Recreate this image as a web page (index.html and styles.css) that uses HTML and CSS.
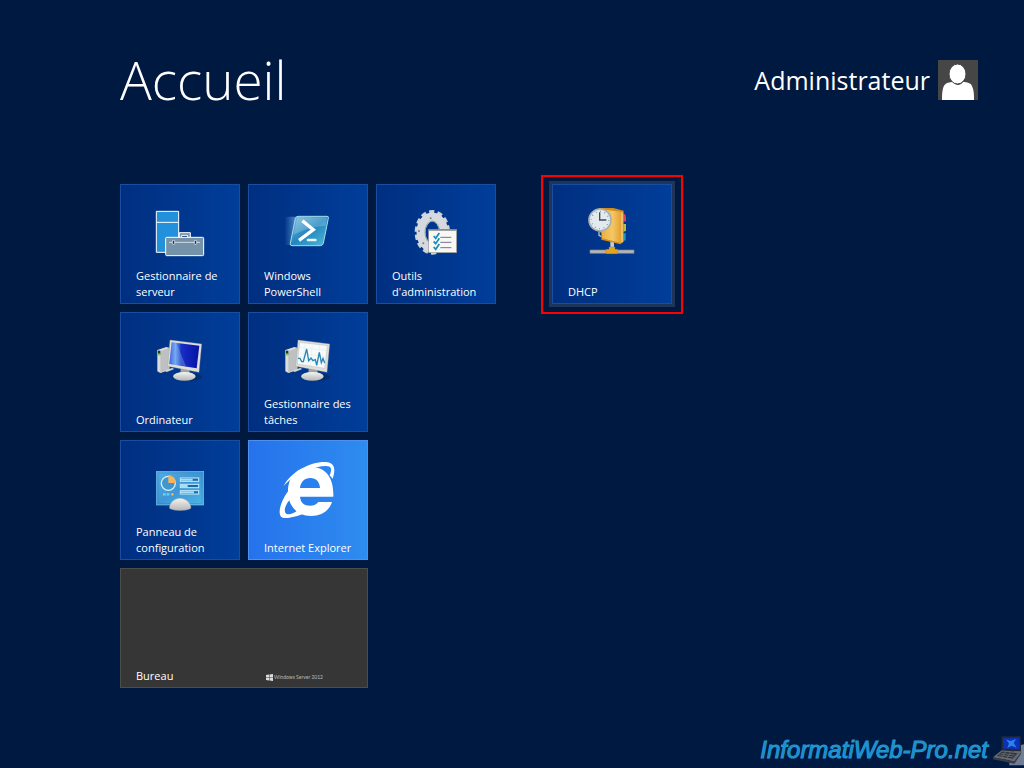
FILE: index.html
```html
<!DOCTYPE html>
<html lang="fr">
<head>
<meta charset="UTF-8">
<meta name="viewport" content="width=device-width, initial-scale=1.0">
<title>Accueil</title>
<link rel="stylesheet" href="styles.css">
</head>
<body>

<header class="header">
    <h1>Accueil</h1>
    <button type="button" class="user">
        <span>Administrateur</span>
        <svg class="avatar" viewBox="0 0 40 40" aria-hidden="true">
            <rect width="40" height="40" fill="#464646"/>
            <path d="M4 40C4 30 5 25 9 23C12 22 14 22 15 22C18 26 22 26 25 22C29 22 33 23 34 26C36 30 36 35 36 40Z" fill="#fff"/>
            <ellipse cx="19.500" cy="14" rx="8.500" ry="10" fill="#fff" stroke="#464646" stroke-width="1"/>
        </svg>
    </button>
</header>

<main class="start">
    <section class="group">
        <div class="tiles">
            <a href="#" class="tile">
                <svg class="icon" viewBox="120 87 144 144" aria-hidden="true">
                    <g stroke="#fff" stroke-width="3">
                        <path d="M121 94H188V217H121ZM121 127H188" fill="#2390dc"/>
                        <path d="M190 172V158H223V172" fill="#7592a8"/>
                        <path d="M197 172V166H215V172" fill="#0a3577"/>
                        <rect x="149" y="172" width="114" height="55" rx="3" fill="#7592a8"/>
                        <path d="M159 187H252" fill="none" stroke-width="2"/>
                        <rect x="169" y="181" width="7" height="12" rx="2" fill="#0a3577" stroke-width="2"/>
                        <rect x="235" y="181" width="7" height="12" rx="2" fill="#0a3577" stroke-width="2"/>
                    </g>
                </svg>
                <span class="label">Gestionnaire de serveur</span>
            </a>
            <a href="#" class="tile">
                <svg class="icon" viewBox="120 87 144 144" aria-hidden="true">
                    <defs>
                        <linearGradient id="psFill" x1="0" y1="0" x2="1" y2="1">
                            <stop offset="0" stop-color="#7cc0dd"/>
                            <stop offset=".5" stop-color="#2386bf"/>
                            <stop offset="1" stop-color="#50bfd8"/>
                        </linearGradient>
                        <linearGradient id="psTrail">
                            <stop offset="0" stop-color="#69a8dc" stop-opacity="0"/>
                            <stop offset="1" stop-color="#69a8dc" stop-opacity=".8"/>
                        </linearGradient>
                    </defs>
                    <path d="M122 110H160L145 195H122Z" fill="url(#psTrail)"/>
                    <path d="M162 109H249Q255 109 253 115L238 190Q236 197 229 197H144Q137 197 139 190L154 116Q156 109 162 109Z" fill="url(#psFill)" stroke="#a5dbe9" stroke-width="3"/>
                    <path d="M160 112H249L245 137Q195 140 148 164Z" fill="#fff" opacity=".2"/>
                    <path d="M175 122L208 149L165 181" fill="none" stroke="#fff" stroke-width="10"/>
                    <path d="M192 180H214" stroke="#e9faff" stroke-width="8" stroke-linecap="round"/>
                </svg>
                <span class="label">Windows PowerShell</span>
            </a>
            <a href="#" class="tile">
                <svg class="icon" viewBox="120 87 144 144" aria-hidden="true">
                    <defs>
                        <linearGradient id="screenBlue" x1="0" y1="0" x2="1" y2="0">
                            <stop offset="0" stop-color="#1738d4"/>
                            <stop offset=".2" stop-color="#6fa4f0"/>
                            <stop offset=".4" stop-color="#172ec4"/>
                            <stop offset="1" stop-color="#0711a5"/>
                        </linearGradient>
                        <linearGradient id="metal" x1="0" y1="0" x2="0" y2="1">
                            <stop offset="0" stop-color="#f4f4f0"/>
                            <stop offset="1" stop-color="#b5b6b6"/>
                        </linearGradient>
                        <g id="computer">
                            <ellipse cx="214" cy="207" rx="44" ry="12" fill="#02245c" opacity=".6"/>
                            <path d="M124 126L151 117L160 119V185L133 195L124 190Z" fill="#dcdddb"/>
                            <path d="M133 130L160 119V185L133 195Z" fill="#bfc1c1"/>
                            <path d="M126 128H133V140H126Z" fill="#27342b"/>
                            <path d="M126 136H133V142H126Z" fill="#65d52c"/>
                            <path d="M146 188L168 180L175 183L152 192Z" fill="#d6d7d7"/>
                            <path d="M194 181L220 186L222 204H193Z" fill="#a1a3a5"/>
                            <ellipse cx="205" cy="205" rx="34" ry="13" fill="url(#metal)"/>
                            <path d="M162 96L257 108L249 193L155 175Z" fill="#dededa" stroke="#999" stroke-width="1"/>
                        </g>
                    </defs>
                    <use href="#computer"/>
                    <path d="M167 103L250 113L242 181L160 168Z" fill="url(#screenBlue)"/>
                    <path d="M167 103L181 105L210 175L160 168Z" fill="#85b9f3" opacity=".35"/>
                </svg>
                <span class="label">Ordinateur</span>
            </a>
            <a href="#" class="tile">
                <svg class="icon" viewBox="120 87 144 144" aria-hidden="true">
                    <use href="#computer"/>
                    <path d="M167 103L250 113L242 181L160 168Z" fill="#f6fafa" stroke="#a5aaaa" stroke-width="1"/>
                    <path d="M164 118L248 127M162 136L247 145M161 155L245 164M183 105L177 170M205 108L199 174M227 111L221 178" stroke="#d6e3e5" stroke-width="1"/>
                    <path d="M162 151L168 151L173 161L178 161L188 123L194 158L201 150L207 158L214 155L218 172L226 133L232 164L237 151L242 165" fill="none" stroke="#2885b6" stroke-width="4"/>
                </svg>
                <span class="label">Gestionnaire des tâches</span>
            </a>
            <a href="#" class="tile">
                <svg class="icon" viewBox="120 87 144 144" aria-hidden="true">
                    <defs>
                        <linearGradient id="panelFill" x1="0" y1="0" x2="1" y2="1">
                            <stop offset="0" stop-color="#56ace2"/>
                            <stop offset=".5" stop-color="#3e97d4"/>
                            <stop offset="1" stop-color="#4fb6e5"/>
                        </linearGradient>
                    </defs>
                    <rect x="121" y="106" width="142" height="101" fill="url(#panelFill)" stroke="#72bce7" stroke-width="2"/>
                    <rect x="126" y="111" width="132" height="91" fill="none" stroke="#287bbd" stroke-width="1"/>
                    <circle cx="157" cy="142" r="21" fill="#4097cf" stroke="#d4f0fb" stroke-width="4"/>
                    <path d="M157 141V117A24 24 0 0 1 180 141Z" fill="#f7b45b"/>
                    <g fill="#176bab" stroke="#cbeefd" stroke-width="3">
                        <rect x="193" y="126" width="55" height="10"/>
                        <rect x="193" y="145" width="55" height="10"/>
                        <rect x="193" y="164" width="55" height="10"/>
                    </g>
                    <path d="M195 131H230M195 150H215M195 169H234" stroke="#9fe2f8" stroke-width="6"/>
                    <path d="M141 175H161" stroke="#68d6f2" stroke-width="7" stroke-dasharray="8 3"/>
                    <circle cx="169" cy="175" r="4" fill="#ffae48"/>
                    <path d="M160 216C161 200 175 187 192 187S224 200 225 216C217 226 168 226 160 216Z" fill="url(#metal)" stroke="#999ca0" stroke-width="1"/>
                </svg>
                <span class="label">Panneau de configuration</span>
            </a>
            <a href="#" class="tile tile-ie">
                <svg class="icon" viewBox="120 87 144 144" aria-hidden="true">
                    <g fill="#fff">
                        <path fill-rule="evenodd" d="M268 182H168C170 200 180 209 198 209C210 209 218 205 223 198H264C255 225 232 240 201 240C160 240 132 210 132 166C132 122 160 93 201 93C245 93 270 124 268 182ZM168 156H228C227 138 217 126 199 126C181 126 170 138 168 156Z"/>
                        <path d="M119 150C140 108 200 76 246 78C272 80 276 100 266 128L257 118C265 100 262 90 246 90C228 90 211 96 190 104C160 115 137 129 119 150Z"/>
                        <path d="M138 158C112 190 100 228 111 242C121 251 150 243 180 233L162 223C143 237 126 239 123 228C120 215 130 198 140 188Z"/>
                    </g>
                </svg>
                <span class="label">Internet Explorer</span>
            </a>
            <a href="#" class="tile tile-desktop">
                <span class="label">Bureau</span>
                <span class="edition">
                    <svg viewBox="0 0 14 14" aria-hidden="true"><path d="M0 2L6 1V6H0ZM7 1L14 0V6H7ZM0 7H6V13L0 12ZM7 7H14V14L7 13Z" fill="#ddd"/></svg>
                    Windows Server 2012
                </span>
            </a>
        </div>
        <div class="tiles tiles-narrow">
            <a href="#" class="tile">
                <svg class="icon" viewBox="120 87 144 144" aria-hidden="true">
                    <g fill="none" stroke="#cfd3d7">
                        <ellipse cx="181" cy="157" rx="46" ry="60" stroke-width="14" stroke-dasharray="15 9"/>
                        <ellipse cx="181" cy="157" rx="34" ry="46" stroke="#d6dade" stroke-width="27"/>
                        <ellipse cx="181" cy="157" rx="22" ry="34" stroke="#8c9cae" stroke-width="3"/>
                    </g>
                    <g fill="#75808d">
                        <circle cx="176" cy="115" r="3"/>
                        <circle cx="141" cy="153" r="3"/>
                        <circle cx="154" cy="190" r="3"/>
                    </g>
                    <rect x="170" y="148" width="84" height="70" fill="#f7f7f4" stroke="#9b9995" stroke-width="2"/>
                    <path d="M170 150H254" stroke="#77777a" stroke-width="4"/>
                    <path d="M205 172H238M205 187H238M205 203H238" stroke="#77718d" stroke-width="3"/>
                    <path d="M185 168L191 175L202 159M185 184L191 191L202 175M185 201L191 208L202 192" fill="none" stroke="#178bb9" stroke-width="5"/>
                </svg>
                <span class="label">Outils d'administration</span>
            </a>
        </div>
    </section>

    <section class="group">
        <a href="#" class="tile tile-selected">
            <svg class="icon" viewBox="150 111 144 144" aria-hidden="true">
                <defs>
                    <linearGradient id="bookFill">
                        <stop offset="0" stop-color="#e8aa35"/>
                        <stop offset=".6" stop-color="#f6c765"/>
                        <stop offset="1" stop-color="#e3a132"/>
                    </linearGradient>
                </defs>
                <path d="M217 206H228V232H217Z" fill="#c6ccd1"/>
                <path d="M156 234H288V244H156Z" fill="#b4b6b8" stroke="#7d848d" stroke-width="2"/>
                <path d="M213 225H231V232H239V245H204V232H213Z" fill="#e4a51b" stroke="#a8700c" stroke-width="1"/>
                <path d="M248 126H260Q265 128 264 148L248 151Z" fill="#dc4258"/>
                <path d="M248 156H264V177L248 181Z" fill="#b9bd3d"/>
                <path d="M248 184H263V205L248 210Z" fill="#2299bc"/>
                <path d="M181 108H226L257 116V209L247 217L190 203V184L180 174Z" fill="#d18c19"/>
                <path d="M184 111L249 119V213L193 199Z" fill="url(#bookFill)"/>
                <path d="M252 121V211" stroke="#fff1ca" stroke-width="3"/>
                <path d="M183 180V190L190 194" fill="none" stroke="#b5bec5" stroke-width="4"/>
                <circle cx="186" cy="144" r="33" fill="#e2eaed" stroke="#a6afb5" stroke-width="5"/>
                <circle cx="186" cy="144" r="26" fill="none" stroke="#687b8a" stroke-width="4" stroke-dasharray="2 11.600"/>
                <path d="M185 121V144H205" fill="none" stroke="#3c4c59" stroke-width="4"/>
            </svg>
            <span class="label">DHCP</span>
        </a>
    </section>
</main>

<footer class="footer">
    <a href="#">InformatiWeb-Pro.net</a>
    <svg class="laptop" viewBox="0 0 100 96" aria-hidden="true">
        <path d="M54 90L76 36L100 30V96H54Z" fill="#6f7d95"/>
        <path d="M30 6L89 5L91 53L30 49Z" fill="#252b3a"/>
        <path d="M35 11L85 10L86 45L35 43Z" fill="#0b32b9"/>
        <path d="M44 15L58 20L75 14L68 26L77 41L61 35L48 42L53 28Z" fill="#2b83e8"/>
        <path d="M30 49L91 54L69 83L3 71Z" fill="#666b72"/>
        <path d="M31 53L80 58L65 75L15 67Z" fill="#30343c"/>
        <path d="M3 71L69 83L91 54V60L70 91L3 77Z" fill="#383d48"/>
        <path d="M27 58L72 64M22 63L67 70M42 54L31 70M58 56L47 73" stroke="#777d85" stroke-width="2"/>
    </svg>
</footer>

</body>
</html>
```

FILE: styles.css
```css
* {
    box-sizing: border-box;
}
body {
    margin: 0;
    min-height: 100vh;
    display: flex;
    flex-direction: column;
    background-color: #001940;
    color: white;
    font-family: "Open Sans", "Noto Sans", sans-serif;
}
a {
    color: inherit;
    text-decoration: none;
}
.header {
    display: flex;
    justify-content: space-between;
    align-items: center;
    padding: 40px 46px 0 120px;
}
.header h1 {
    margin: 0;
    font-size: 53px;
    font-weight: 300;
    line-height: 80px;
}
.user {
    display: flex;
    align-items: center;
    gap: 8px;
    padding: 0;
    border: none;
    background: none;
    color: white;
    font-family: inherit;
    font-size: 25px;
    font-weight: 400;
    line-height: 40px;
    cursor: pointer;
}
.avatar {
    width: 40px;
    height: 40px;
}

/* Tiles */
.start {
    display: flex;
    align-items: flex-start;
    gap: 56px;
    padding: 64px 40px 24px 120px;
}
.group {
    display: flex;
    align-items: flex-start;
    gap: 8px;
}
.tiles {
    display: grid;
    grid-template-columns: 120px 120px;
    gap: 8px;
}
.tiles-narrow {
    grid-template-columns: 120px;
}
.tile {
    position: relative;
    display: flex;
    flex-direction: column;
    justify-content: space-between;
    width: 120px;
    height: 120px;
    padding: 24px 16px 3px 15px;
    border: 1px solid #184e9f;
    background: linear-gradient(to right, #002f80, #003e9a);
    font-size: 11px;
    line-height: 16px;
}
.icon {
    width: 48px;
    height: 48px;
    margin-left: 20px;
    flex-shrink: 0;
    overflow: visible;
}
.label {
    margin-right: -8px;
}
.tile-ie {
    border-color: #4c91f0;
    background: linear-gradient(to right, #2672ec, #2e8cef);
}
.tile-desktop {
    grid-column: span 2;
    flex-direction: row;
    align-items: flex-end;
    width: auto;
    padding-right: 44px;
    border-color: #4c4c4c;
    background: #363636;
}
.edition {
    display: flex;
    align-items: center;
    gap: 1px;
    color: #bbb;
    font-family: Lato, sans-serif;
    font-size: 5px;
    line-height: 14px;
}
.edition svg {
    width: 7px;
    height: 7px;
}
.tile-selected {
    outline: 3px solid #1e3459;
}
.tile-selected::after {
    content: "";
    position: absolute;
    inset: -10px -12px -11px;
    border: 2px solid #f00;
}

.footer {
    display: flex;
    justify-content: flex-end;
    align-items: center;
    gap: 4px;
    margin-top: auto;
    color: #168bd0;
    font-family: "Liberation Sans", Arial, sans-serif;
    font-size: 24px;
    font-style: italic;
    line-height: 36px;
    -webkit-text-stroke: 1px #2599d0;
}
.laptop {
    width: 32px;
    height: 32px;
}
```
